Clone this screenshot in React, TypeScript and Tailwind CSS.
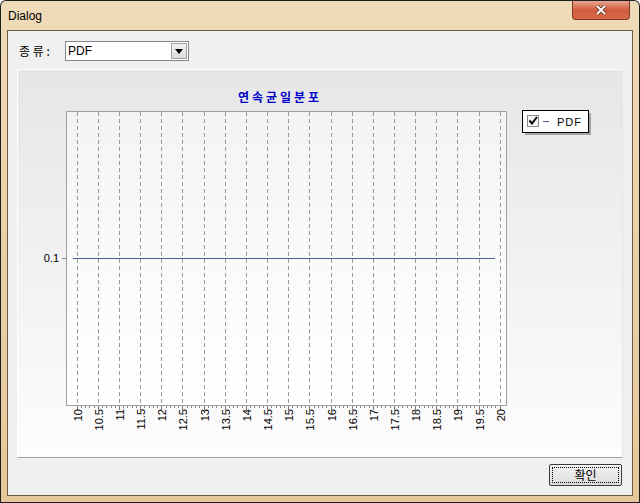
import React from "react"

const ticks = Array.from({ length: 21 }, (_, i) => 10 + i * 0.5)

function Chart() {
    const x0 = 58.7
    const step = 21.15
    return (
        <svg width="604" height="389" className="block" style={{ fontFamily: '"Liberation Sans", "DejaVu Sans", sans-serif' }}>
            <defs>
                <linearGradient id="plotbg" x1="0" y1="0" x2="0" y2="1">
                    <stop offset="0" stopColor="#f4f4f4" />
                    <stop offset="1" stopColor="#ffffff" />
                </linearGradient>
            </defs>
            <text x="262" y="32" textAnchor="middle" fill="#0000c8" fontSize="12" fontWeight="bold" letterSpacing="3" fontFamily='"Noto Sans CJK KR", sans-serif'>
                연속균일분포
            </text>
            <rect x="48.5" y="41.5" width="440" height="294" fill="url(#plotbg)" stroke="#a0a0a0" />
            {ticks.map((t, i) => {
                const x = Math.round(x0 + i * step) + 0.5
                return (
                    <g key={t}>
                        <line x1={x} y1="42" x2={x} y2="335" stroke="#999" strokeDasharray="4 3" />
                        <line x1={x} y1="336" x2={x} y2="340" stroke="#777" />
                        <text x={x + 4} y="339" transform={`rotate(-90 ${x + 4} 339)`} textAnchor="end" fontSize="11" fill="#000">
                            {t % 1 === 0 ? String(t) : t.toFixed(1)}
                        </text>
                    </g>
                )
            })}
            {Array.from({ length: 100 }, (_, j) => {
                if (j % 5 === 0) return null
                const x = Math.round(x0 + (j * step) / 5) + 0.5
                return <line key={j} x1={x} y1="336" x2={x} y2="338" stroke="#888" />
            })}
            <line x1="44" y1="188.5" x2="48" y2="188.5" stroke="#888" />
            <text x="41" y="192" textAnchor="end" fontSize="11" fill="#000">0.1</text>
            <line x1="55" y1="188.5" x2="477" y2="188.5" stroke="#4b5f8e" />
            <rect x="507" y="43" width="66" height="22" fill="#777" opacity="0.6" />
            <rect x="504.5" y="40.5" width="66" height="22" fill="#fff" stroke="#000" />
            <rect x="509.5" y="45.5" width="11" height="11" fill="#f4f4f4" stroke="#8a8a8a" />
            <path d="M511.5 50.5 L514 53.5 L519 47" fill="none" stroke="#000" strokeWidth="2" />
            <line x1="525" y1="51.5" x2="531" y2="51.5" stroke="#4b5f8e" />
            <text x="539" y="55.5" fontSize="11" fill="#000" letterSpacing="1">PDF</text>
        </svg>
    )
}

export default function App() {
    return (
        <div className="w-[640px] h-[503px] bg-[#1e1e1e] p-px rounded-t-[6px] overflow-hidden">
            <div className="w-full h-full rounded-t-[5px] bg-gradient-to-b from-[#f0dbb8] via-[#ead0a5] to-[#e6c99a] flex flex-col px-[6px] pb-[6px]">
                {/* title bar */}
                <div className="h-[29px] flex items-start justify-between">
                    <span className="pt-[6px] pl-[1px] text-[12px] text-black" style={{ fontFamily: '"Liberation Sans", sans-serif' }}>
                        Dialog
                    </span>
                    <div className="mr-[3px] w-[58px] h-[19px] rounded-b-[4px] border border-[#7a3a2a] border-t-0 bg-gradient-to-b from-[#e8a590] via-[#cf5a3c] to-[#d9694a] flex items-center justify-center">
                        <svg width="12" height="10" viewBox="0 0 12 10">
                            <path d="M2 1 L10 9 M10 1 L2 9" stroke="#5a2a20" strokeWidth="3.4" />
                            <path d="M2 1 L10 9 M10 1 L2 9" stroke="#fff" strokeWidth="2" />
                        </svg>
                    </div>
                </div>
                {/* client */}
                <div className="flex-1 border border-[#6b5a45] bg-[#f0f0f0] flex flex-col" style={{ fontFamily: '"Liberation Sans", "Noto Sans CJK KR", sans-serif' }}>
                    <div className="flex items-center h-[38px] pl-[11px] pt-[2px]">
                        <span className="text-[12px] text-black w-[46px]" style={{ fontFamily: '"Noto Sans CJK KR", sans-serif' }}>종 류 :</span>
                        <div className="w-[124px] h-[20px] border border-[#828790] bg-white flex items-center justify-between">
                            <span className="text-[12px] pl-[2px] text-black">PDF</span>
                            <div className="w-[16px] h-[16px] mr-[1px] bg-gradient-to-b from-[#f2f2f2] to-[#dcdcdc] border border-[#a0a0a0] flex items-center justify-center">
                                <svg width="8" height="5" viewBox="0 0 8 5"><path d="M0 0 H8 L4 5 Z" fill="#000" /></svg>
                            </div>
                        </div>
                    </div>
                    <div className="mx-[9px] h-[389px] border-t border-l border-white border-b border-b-[#a0a0a0] border-r border-r-[#e4e4e4] bg-gradient-to-b from-[#e6e6e6] to-[#fdfdfd]">
                        <Chart />
                    </div>
                    <div className="flex justify-end pr-[10px] pt-[6px]">
                        <div className="w-[73px] h-[22px] border border-[#3c3c3c] rounded-[2px] bg-gradient-to-b from-[#f4f4f4] to-[#dcdcdc] p-[2px]">
                            <div className="w-full h-full border border-dotted border-black flex items-center justify-center text-[12px] text-black" style={{ fontFamily: '"Noto Sans CJK KR", sans-serif' }}>
                                확인
                            </div>
                        </div>
                    </div>
                </div>
            </div>
        </div>
    )
}
